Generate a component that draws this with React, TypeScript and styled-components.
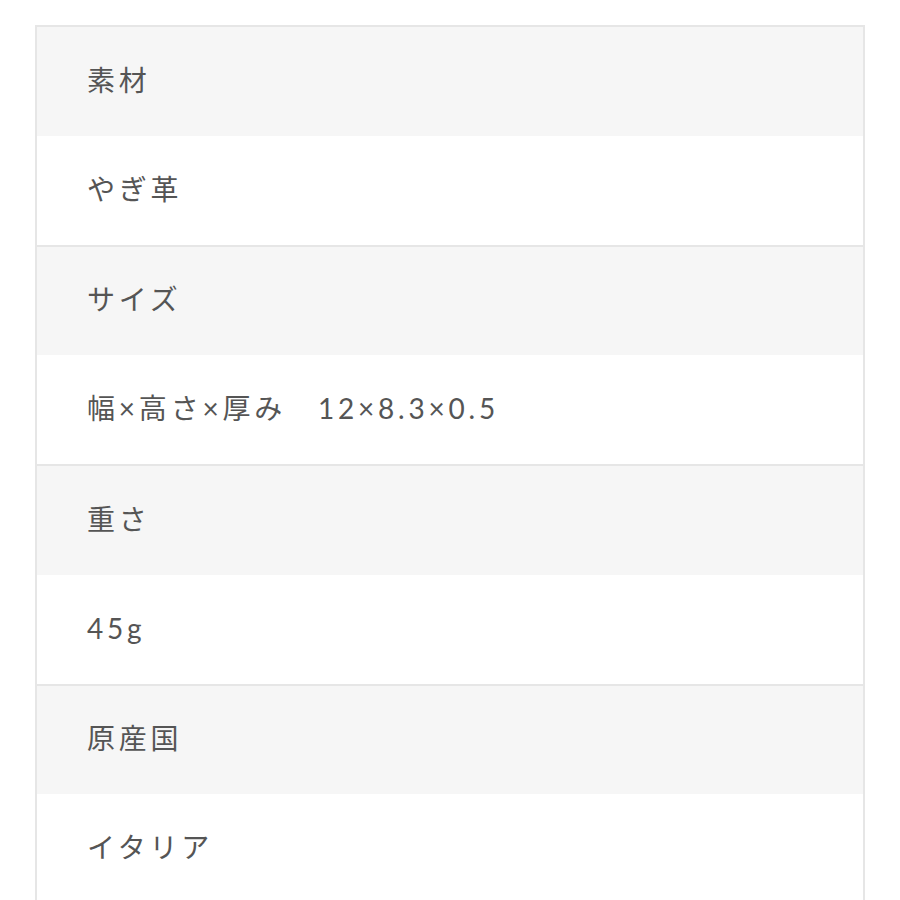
import React from "react"
import styled, { createGlobalStyle } from "styled-components"

const GlobalStyle = createGlobalStyle`
  html, body {
    margin: 0;
    padding: 0;
    background: #ffffff;
  }
  body {
    font-family: Lato, "Noto Sans CJK JP", sans-serif;
    color: #555555;
  }
`

const Page = styled.div`
  padding: 25px 35px 0;
`

const SpecTable = styled.div`
  border: 2px solid #e6e6e6;
  border-bottom: none;
  display: flex;
  flex-direction: column;
`

const SpecGroup = styled.div`
  display: flex;
  flex-direction: column;
  border-bottom: 2px solid #e6e6e6;
`

const SpecCell = styled.div<{ $head?: boolean }>`
  height: 108.75px;
  box-sizing: border-box;
  display: flex;
  align-items: center;
  padding: 0 50px 3px;
  background: ${props => (props.$head ? "#f6f6f6" : "#ffffff")};
  font-size: 28px;
  letter-spacing: 3.8px;
  line-height: 1;
  color: #555555;
  white-space: pre;
`

const specs = [
  { label: "素材", value: "やぎ革" },
  { label: "サイズ", value: "幅×高さ×厚み　12×8.3×0.5" },
  { label: "重さ", value: "45g" },
  { label: "原産国", value: "イタリア" },
]

export default function App() {
  return (
    <>
      <GlobalStyle />
      <Page>
        <SpecTable>
          {specs.map(spec => (
            <SpecGroup key={spec.label}>
              <SpecCell $head>{spec.label}</SpecCell>
              <SpecCell>{spec.value}</SpecCell>
            </SpecGroup>
          ))}
        </SpecTable>
      </Page>
    </>
  )
}
